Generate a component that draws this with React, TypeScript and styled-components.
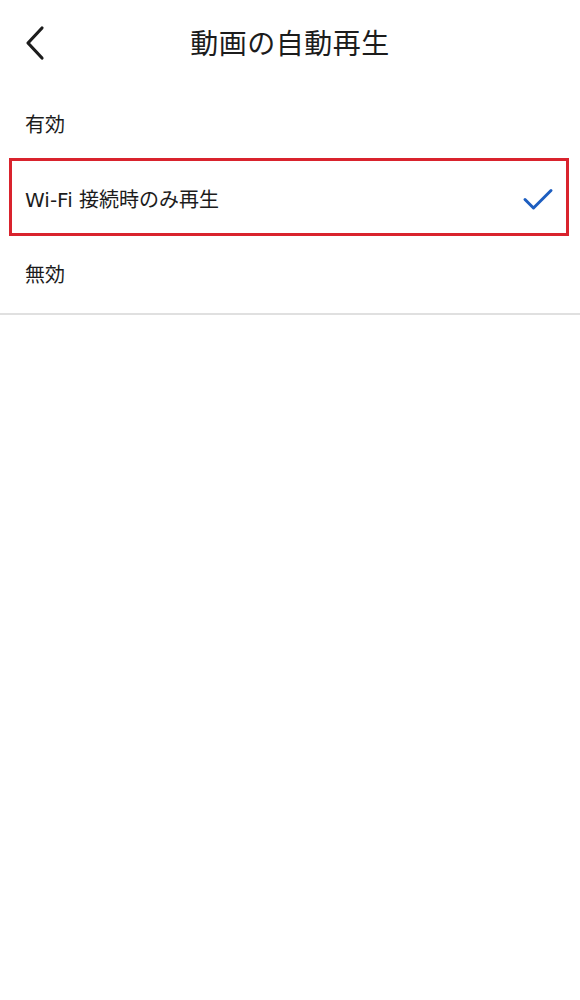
import styled, { createGlobalStyle } from 'styled-components';

const GlobalStyle = createGlobalStyle`
  html, body {
    margin: 0;
    padding: 0;
    background: #ffffff;
  }
  body {
    font-family: 'DejaVu Sans', 'Noto Sans CJK JP', sans-serif;
    color: #1c1c1c;
  }
`;

const Screen = styled.div`
  width: 580px;
  min-height: 1000px;
  background: #ffffff;
`;

const Header = styled.header`
  position: relative;
  display: flex;
  align-items: center;
  justify-content: center;
  height: 86px;
`;

const BackButton = styled.button`
  position: absolute;
  left: 18px;
  top: 24px;
  display: flex;
  align-items: center;
  justify-content: center;
  width: 34px;
  height: 38px;
  padding: 0;
  border: none;
  background: none;
  color: #1c1c1c;
  cursor: pointer;
`;

const Title = styled.h1`
  margin: 0 0 2px;
  font-family: 'Noto Sans CJK JP', sans-serif;
  font-size: 28px;
  font-weight: 400;
  letter-spacing: 0.5px;
  color: #1c1c1c;
`;

const OptionList = styled.ul`
  margin: 0;
  padding: 0 0 2px;
  list-style: none;
  border-bottom: 2px solid #e0e0e0;
`;

const Option = styled.li<{ $highlighted?: boolean }>`
  position: relative;
  display: flex;
  align-items: center;
  justify-content: space-between;
  height: 75px;
  padding: 0 26px 0 25px;
  font-size: 20px;
  color: #1c1c1c;

  ${({ $highlighted }) =>
    $highlighted &&
    `
    &::after {
      content: '';
      position: absolute;
      left: 9px;
      right: 11px;
      top: -3px;
      bottom: 0;
      border: 3px solid #d9232d;
      pointer-events: none;
    }
  `}
`;

const Check = () => (
  <svg width="32" height="26" viewBox="0 0 32 26" fill="none">
    <path
      d="M3 13.5 L11.5 22 L29 4.5"
      stroke="#1d5ec0"
      strokeWidth="3"
      strokeLinecap="round"
      strokeLinejoin="round"
    />
  </svg>
);

const Chevron = () => (
  <svg width="24" height="36" viewBox="0 0 24 36" fill="none">
    <path
      d="M19 3 L5 18 L19 33"
      stroke="#1c1c1c"
      strokeWidth="3.2"
      strokeLinecap="round"
      strokeLinejoin="round"
    />
  </svg>
);

const options = [
  { label: '有効', selected: false },
  { label: 'Wi-Fi 接続時のみ再生', selected: true },
  { label: '無効', selected: false },
];

const App = () => {
  return (
    <>
      <GlobalStyle />
      <Screen>
        <Header>
          <BackButton aria-label="戻る">
            <Chevron />
          </BackButton>
          <Title>動画の自動再生</Title>
        </Header>
        <OptionList>
          {options.map((option) => (
            <Option key={option.label} $highlighted={option.selected}>
              <span>{option.label}</span>
              {option.selected && <Check />}
            </Option>
          ))}
        </OptionList>
      </Screen>
    </>
  );
};

export default App;
